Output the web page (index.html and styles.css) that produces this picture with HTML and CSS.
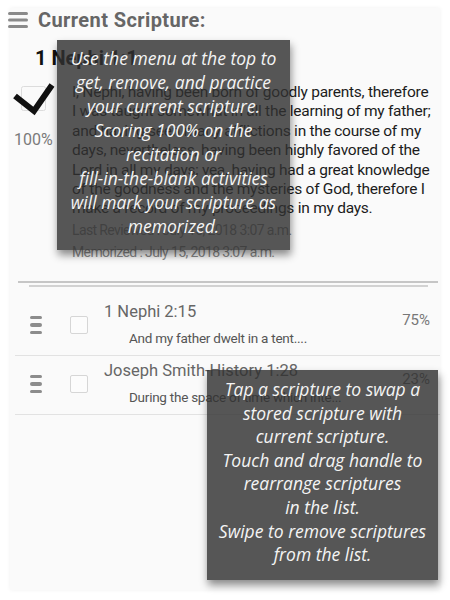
FILE: index.html
```html
<!DOCTYPE html>
<html>
<head>
<meta charset="utf-8">
<link rel="stylesheet" href="styles.css">
</head>
<body>
<div class="card">
  <header class="head">
    <svg class="menu" width="20" height="18" viewBox="0 0 20 18"><rect x="0" y="1" width="20" height="3" rx="1.5" fill="#8a8a8a"/><rect x="0" y="7.5" width="20" height="3" rx="1.5" fill="#8a8a8a"/><rect x="0" y="14" width="20" height="3" rx="1.5" fill="#8a8a8a"/></svg>
    <h1 class="title">Current Scripture:</h1>
  </header>
  <section class="current">
    <h2 class="ref">1 Nephi 1:1</h2>
    <div class="cur-body">
      <div class="cur-left">
        <svg class="check" width="42" height="36" viewBox="0 0 42 36"><rect x="8.5" y="4.5" width="24" height="24" rx="2" fill="#fafafa" stroke="#dcdcdc"/><polyline points="2,14 21,29 39,3" fill="none" stroke="#111" stroke-width="6" stroke-linejoin="miter"/></svg>
        <div class="pct-big">100%</div>
      </div>
      <div class="cur-text">
        <p class="verse">I, Nephi, having been born of goodly parents, therefore<br>I was taught somewhat in all the learning of my father;<br>and having seen many afflictions in the course of my<br>days, nevertheless, having been highly favored of the<br>Lord in all my days; yea, having had a great knowledge<br>of the goodness and the mysteries of God, therefore I<br>make a record of my proceedings in my days.</p>
        <div class="meta">Last Reviewed : July 15, 2018 3:07 a.m.</div>
        <div class="meta">Memorized : July 15, 2018 3:07 a.m.</div>
      </div>
    </div>
  </section>
  <div class="sep sep-a"></div>
  <div class="sep sep-b"></div>
  <ul class="list">
    <li class="row">
      <span class="handle"><i></i><i></i><i></i></span>
      <span class="cb"></span>
      <div class="info">
        <div class="r-title">1 Nephi 2:15</div>
        <div class="r-sub">And my father dwelt in a tent....</div>
      </div>
      <span class="pct">75%</span>
    </li>
    <li class="row">
      <span class="handle"><i></i><i></i><i></i></span>
      <span class="cb"></span>
      <div class="info">
        <div class="r-title">Joseph Smith-History 1:28</div>
        <div class="r-sub">During the space of time which inte...</div>
      </div>
      <span class="pct">23%</span>
    </li>
  </ul>
</div>
<div class="tip tip-1">Use the menu at the top to<br>get, remove, and practice<br>your current scripture.<br>Scoring 100% on the<br>recitation or<br>fill-in-the-blank activities<br>will mark your scripture as<br>memorized.</div>
<div class="tip tip-2">Tap a scripture to swap a<br>stored scripture with<br>current scripture.<br>Touch and drag handle to<br>rearrange scriptures<br>in the list.<br>Swipe to remove scriptures<br>from the list.</div>
</body>
</html>
```
FILE: styles.css
```css
* { box-sizing: border-box; }
body {
  margin: 0;
  background: #ffffff;
  font-family: Roboto, "Liberation Sans", sans-serif;
  width: 450px;
  height: 600px;
  overflow: hidden;
}
.card {
  margin: 8px 10px 0 10px;
  height: 582px;
  background: #fafafa;
  box-shadow: 0 0 4px rgba(0,0,0,0.06);
}
.head {
  display: flex;
  align-items: center;
  gap: 10px;
  height: 24px;
}
.menu { display: block; margin-left: -2px; }
.title {
  margin: 0;
  font-size: 20px;
  line-height: 24px;
  font-weight: 700;
  letter-spacing: 0.4px;
  color: #666;
}
.ref {
  margin: 14px 0 0 25px;
  font-size: 20px;
  line-height: 24px;
  font-weight: 700;
  color: #111;
}
.cur-body {
  display: flex;
  margin-top: 13px;
}
.cur-left {
  width: 62px;
  flex: none;
  padding-left: 3px;
}
.check { display: block; margin-top: -1px; }
.pct-big {
  margin-top: 12px;
  font-size: 16px;
  line-height: 20px;
  color: #7a7a7a;
  padding-left: 1px;
}
.cur-text { flex: 1; }
.verse {
  margin: 0;
  font-size: 15.5px;
  line-height: 19.4px;
  letter-spacing: -0.25px;
  color: #1c1c1c;
  white-space: nowrap;
}
.meta {
  font-size: 14px;
  line-height: 22px;
  letter-spacing: -0.62px;
  color: #8a8a8a;
}
.sep { height: 2px; }
.sep-a { margin: 18px 2px 0 8px; background: #c6c6c6; }
.sep-b { margin: 2px 12px 0 19px; background: #d2d2d2; }
.list {
  list-style: none;
  margin: 10px 0 0 5px;
  padding: 0;
}
.row {
  display: flex;
  align-items: center;
  padding: 5px 0 7px 0;
  border-bottom: 1px solid #e2e2e2;
}
.handle {
  margin-left: 15px;
  width: 12px;
  display: flex;
  flex-direction: column;
  gap: 4px;
  flex: none;
}
.handle i {
  display: block;
  height: 3.5px;
  border-radius: 2px;
  background: #8c8c8c;
}
.cb {
  margin-left: 28px;
  width: 18px;
  height: 18px;
  border: 1px solid #d6d6d6;
  border-radius: 2px;
  background: #fcfcfc;
  flex: none;
}
.info { margin-left: 16px; flex: 1; }
.r-title {
  font-size: 16.5px;
  line-height: 20px;
  color: #666;
}
.r-sub {
  margin: 6px 0 0 25px;
  font-size: 13.5px;
  line-height: 20px;
  letter-spacing: -0.25px;
  color: #555;
}
.pct {
  align-self: flex-start;
  margin: 8px 10px 0 0;
  font-size: 15px;
  line-height: 20px;
  color: #777;
}
.tip {
  position: absolute;
  background: rgba(48,48,48,0.81);
  box-shadow: 1px 5px 8px rgba(0,0,0,0.45);
  color: #f4f4f4;
  font-family: "Open Sans", sans-serif;
  font-style: italic;
  font-size: 17.5px;
  text-align: center;
  white-space: nowrap;
}
.tip-1 {
  left: 57px; top: 40px; width: 233px; height: 210px;
  padding-top: 6px;
  line-height: 24px;
}
.tip-2 {
  left: 207px; top: 370px; width: 231px; height: 210px;
  padding-top: 8px;
  line-height: 23.6px;
}
```
